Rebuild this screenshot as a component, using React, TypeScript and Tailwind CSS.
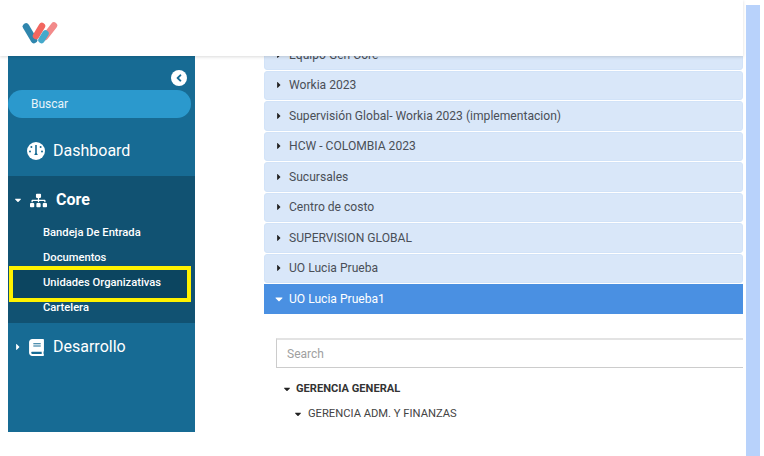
import { FaAngleLeft, FaBook, FaCaretDown, FaCaretRight, FaSitemap } from 'react-icons/fa'

const rows = [
  'Equipo Gen Core',
  'Workia 2023',
  'Supervisión Global- Workia 2023 (implementacion)',
  'HCW - COLOMBIA 2023',
  'Sucursales',
  'Centro de costo',
  'SUPERVISION GLOBAL',
  'UO Lucia Prueba',
]

const Logo = () => (
  <svg width="36" height="23" viewBox="0 0 36 23" fill="none" strokeLinecap="round" strokeWidth="6.5">
    <path d="M4 4.5 L12 18" stroke="#2f86ad" />
    <path d="M14 14 L20 4" stroke="#f2665f" />
    <path d="M23 15 L32 3.5" stroke="#f28a8a" />
    <path d="M19.5 18 L23.5 11.5" stroke="#45a9cb" />
  </svg>
)

const Gauge = () => (
  <svg width="18" height="18" viewBox="0 0 18 18">
    <circle cx="9" cy="9" r="9" fill="white" />
    <circle cx="4.4" cy="5" r="1" fill="#176b94" />
    <circle cx="13.6" cy="5" r="1" fill="#176b94" />
    <circle cx="3" cy="9.5" r="1" fill="#176b94" />
    <circle cx="15" cy="9.5" r="1" fill="#176b94" />
    <path d="M8.2 3 H9.8 V11 L10.8 13 H7.2 L8.2 11 Z" fill="#176b94" />
  </svg>
)

const App = () => {
  return (
    <div className="flex h-[456px] w-[764px] overflow-hidden bg-white font-['Roboto',sans-serif]">
      <div className="flex w-[743px] flex-col">
        {/* Header */}
        <div className="relative z-10 flex h-14 items-center bg-white pl-[22px] pt-[10px] shadow-[0_1px_3px_rgba(0,0,0,0.15)]">
          <Logo />
        </div>

        <div className="flex flex-1 overflow-hidden">
          {/* Sidebar */}
          <div className="ml-2 flex h-[376px] w-[187px] flex-col bg-[#176b94] text-white">
            <div className="flex justify-end pr-[8px] pt-[14px]">
              <div className="flex h-4 w-4 items-center justify-center rounded-full bg-white text-[#176b94]">
                <FaAngleLeft className="text-[12px]" />
              </div>
            </div>
            <div className="mt-[4px] flex h-[28px] w-[183px] items-center rounded-full bg-[#2b99cd] pl-[23px] text-[12px] text-[#e8f4fa]">
              Buscar
            </div>
            <div className="mt-[19px] flex h-[28px] items-center pl-[19px] text-[16px]">
              <Gauge />
              <span className="ml-[8px]">Dashboard</span>
            </div>
            <div className="mt-[11px] flex h-[147px] flex-col bg-[#115272] pt-[11px]">
              <div className="flex h-[26px] items-center pl-[5px] text-[16px] font-bold">
                <FaCaretDown className="text-[10px]" />
                <FaSitemap className="ml-[7px] text-[17px]" />
                <span className="ml-[9px]">Core</span>
              </div>
              <div className="mt-[8px] flex h-[25px] items-center pl-[35px] text-[11.2px] font-medium">Bandeja De Entrada</div>
              <div className="flex h-[25px] items-center pl-[35px] text-[11.2px] font-medium">Documentos</div>
              <div className="relative -mt-[5px] -mb-[6px] ml-px flex h-[36px] w-[182px] items-center border-[4px] border-[#fff200] bg-[#0c4560] pb-[2px] pl-[30px] text-[11.2px] font-medium">
                Unidades Organizativas
              </div>
              <div className="flex h-[25px] items-center pl-[35px] text-[11.2px] font-medium">Cartelera</div>
            </div>
            <div className="mt-[11px] flex h-[26px] items-center pl-[5px] text-[16px]">
              <FaCaretRight className="text-[10px]" />
              <FaBook className="ml-[5px] text-[17px]" />
              <span className="ml-[8px]">Desarrollo</span>
            </div>
          </div>

          {/* Content */}
          <div className="ml-[69px] flex w-[479px] flex-col">
            <div className="-mt-[16px] flex flex-col gap-[1px]">
              {rows.map((row) => (
                <div key={row} className="flex h-[29.5px] items-center rounded-[3px] border border-[#d2e3f8] bg-[#d9e7f9] pl-[9px] text-[12.1px] text-[#4a4f57]">
                  <FaCaretRight className="text-[10px] text-[#222]" />
                  <span className="ml-[5px]">{row}</span>
                </div>
              ))}
              <div className="flex h-[30px] items-center bg-[#4a90e2] pl-[9px] text-[12.1px] text-white">
                <FaCaretDown className="text-[12px]" />
                <span className="ml-[4px]">UO Lucia Prueba1</span>
              </div>
            </div>
            <div className="ml-[12px] mt-[24px] flex h-[30px] items-center border border-r-0 border-t-2 border-[#cccccc] border-t-[#e3e3e3] pl-[10px] text-[12px] text-[#a0a0a0]">
              Search
            </div>
            <div className="ml-[18px] mt-[13px] flex items-center text-[11.1px] font-bold text-[#333]">
              <FaCaretDown className="text-[10px] text-[#222]" />
              <span className="ml-[4px]">GERENCIA GENERAL</span>
            </div>
            <div className="ml-[29px] mt-[8px] flex items-center text-[11.2px] text-[#444]">
              <FaCaretDown className="text-[10px] text-[#222]" />
              <span className="ml-[5px]">GERENCIA ADM. Y FINANZAS</span>
            </div>
          </div>
        </div>
      </div>

      {/* Right bar */}
      <div className="ml-[3px] mt-[5px] w-[14px] bg-[#b8d2fb]" />
    </div>
  )
}

export default App
